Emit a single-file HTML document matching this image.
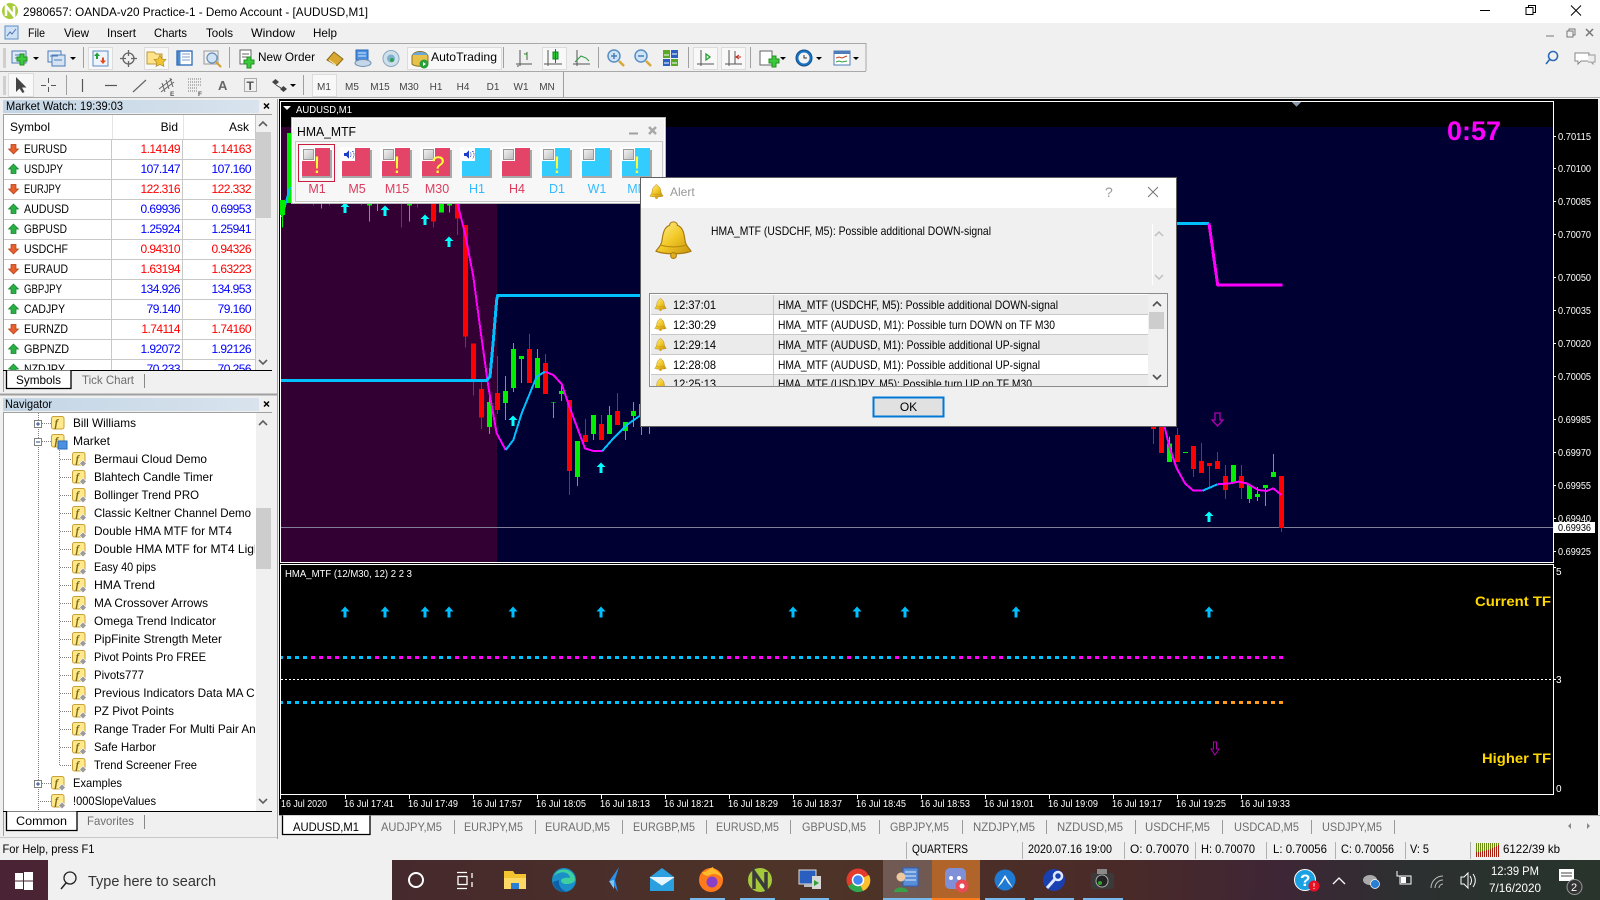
<!DOCTYPE html>
<html><head><meta charset="utf-8"><title>MT4</title>
<style>
html,body{margin:0;padding:0;background:#f0f0f0;width:1600px;height:900px;overflow:hidden}
svg{display:block}
text{font-family:"Liberation Sans",sans-serif;font-size:12px;fill:#000}
.ax text,.ax{font-size:10px;fill:#fff}
.g{fill:#6e6e6e}
.tf{font-size:10px;fill:#444;text-anchor:middle}
.r{fill:#ff0000;text-anchor:end}
.b{fill:#0000ff;text-anchor:end}
.lb{font-size:12.5px;text-anchor:middle}
.pr{font-size:10px;fill:#fff}
.ex{font-size:24px;fill:#ffff33;text-anchor:middle}
.crisp{shape-rendering:crispEdges}
</style></head><body>
<svg width="1600" height="900" viewBox="0 0 1600 900" xmlns="http://www.w3.org/2000/svg">
<defs>
<linearGradient id="hd" x1="0" x2="1" y1="0" y2="0"><stop offset="0" stop-color="#c3d5e5"/><stop offset="1" stop-color="#d8e3ed"/></linearGradient>
<linearGradient id="tb" x1="0" x2="1" y1="0" y2="0"><stop offset="0" stop-color="#4a2434"/><stop offset=".25" stop-color="#46292c"/><stop offset=".5" stop-color="#4e3428"/><stop offset=".7" stop-color="#4a2a28"/><stop offset=".8" stop-color="#3e2636"/><stop offset=".88" stop-color="#2c3030"/><stop offset="1" stop-color="#28342c"/></linearGradient>
<linearGradient id="bl" x1="0" x2="1" y1="0" y2="1"><stop offset="0" stop-color="#fff2a0"/><stop offset=".5" stop-color="#f2c927"/><stop offset="1" stop-color="#c8930e"/></linearGradient>
<linearGradient id="ck" x1="0" x2="1" y1="0" y2="1"><stop offset="0" stop-color="#f4f4f4"/><stop offset="1" stop-color="#bdbdbd"/></linearGradient>
<symbol id="bell" viewBox="0 0 40 40"><path d="M20 2c-3 0-4 2-4 3.500C9 8 9 17 8 22 7 27 3 30 2 32c8 3.500 28 3.500 36 0-1-2-5-5-6-10-1-5-1-14-8-16.500C24 4 23 2 20 2Z" fill="url(#bl)" stroke="#a87a10" stroke-width="1.200"/><path d="M7 26c8 2 18 2 26 0" fill="none" stroke="#b88a10" stroke-width="1.200"/><circle cx="20" cy="36.500" r="3" fill="#e0ae20" stroke="#a87a10"/></symbol>
<symbol id="fi" viewBox="0 0 15 15"><rect x=".5" y=".5" width="12.500" height="12.500" rx="2" fill="#ffe98a" stroke="#c9a136"/><text x="3.500" y="10.500" style="font:italic bold 11px 'Liberation Serif',serif;fill:#7a6a20">f</text><path d="M11 8l3.500 3.500-3.500 3.500-3.500-3.500Z" fill="#9a9a9a" stroke="#fff" stroke-width=".6"/></symbol>
<symbol id="fo" viewBox="0 0 15 15"><rect x=".5" y=".5" width="12.500" height="12.500" rx="2" fill="#ffe98a" stroke="#c9a136"/><text x="3.500" y="10.500" style="font:italic bold 11px 'Liberation Serif',serif;fill:#7a6a20">f</text></symbol>
<path id="ud" d="M-5 0-2.500 0-2.500-4.500 2.500-4.500 2.500 0 5 0 0 5Z" fill="#e8602c" stroke="#b03c14" stroke-width=".7"/>
<path id="uu" d="M-5 0-2.500 0-2.500 4.500 2.500 4.500 2.500 0 5 0 0-5Z" fill="#28b044" stroke="#128028" stroke-width=".7"/>
<path id="ca" d="M0-5.500-4.500-1-1.500-1-1.500 5 1.500 5 1.500-1 4.500-1Z" fill="#00ffff"/>
<path id="sa" d="M0-5.500-4.500-.5-1.500-.5-1.500 5.500 1.500 5.500 1.500-.5 4.500-.5Z" fill="#00bfff"/>
<symbol id="ts" viewBox="0 0 34 34"><rect x="0" y="0" width="31" height="30" fill="#fff"/><rect x="2" y="3" width="30" height="28" fill="#a8a8a8"/><rect x="2" y="1" width="28" height="28"/></symbol>
<symbol id="cb" viewBox="0 0 14 14"><rect x="0" y="0" width="13" height="13" fill="#fff"/><rect x="1.500" y="1.500" width="10" height="10" fill="url(#ck)" stroke="#999" stroke-width=".8"/></symbol>
<symbol id="spk" viewBox="0 0 14 14"><rect x="0" y="0" width="13" height="13" fill="#fff"/><path d="M2 5h2l3-3v9l-3-3H2Z" fill="#1f3fc8"/><path d="M8.500 4.500c1 1.500 1 3 0 4.500M10.500 3c2 2.500 2 5 0 7.500" stroke="#1f3fc8" fill="none" stroke-dasharray="1 1"/></symbol>
<clipPath id="mw"><rect x="4" y="115" width="252" height="255"/></clipPath>
<clipPath id="nv"><rect x="4" y="413" width="251" height="398"/></clipPath>
<clipPath id="al"><rect x="650" y="294" width="498" height="92"/></clipPath>
<clipPath id="dt"><rect x="281" y="640" width="1100" height="80"/></clipPath>
</defs>

<rect width="1600" height="900" fill="#f0f0f0"/>
<rect width="1600" height="23" fill="#fff"/>
<!-- Title bar -->
<circle cx="10" cy="11" r="8" fill="#a6cc3a"/><path d="M6 16V6l8 10V6" stroke="#fff" stroke-width="2.500" fill="none"/>
<text x="23" y="16" textLength="345" lengthAdjust="spacingAndGlyphs">2980657: OANDA-v20 Practice-1 - Demo Account - [AUDUSD,M1]</text>
<path d="M1480 10.500h10" stroke="#000"/><rect x="1526" y="7.500" width="7" height="7" fill="none" stroke="#000"/><path d="M1528.500 7.500v-2h7v7h-2" fill="none" stroke="#000"/><path d="M1571 5.500l10 10m0-10l-10 10" stroke="#000"/>

<!-- Menu -->
<rect x="5" y="26" width="13" height="13" fill="#cfe2f5" stroke="#5b8fc9"/><path d="M7 36l3-4 2 2 4-5" stroke="#4a70b0" fill="none"/>
<text x="28" y="37" textLength="17" lengthAdjust="spacingAndGlyphs">File</text>
<text x="64" y="37" textLength="25" lengthAdjust="spacingAndGlyphs">View</text>
<text x="107" y="37" textLength="29" lengthAdjust="spacingAndGlyphs">Insert</text>
<text x="154" y="37" textLength="33" lengthAdjust="spacingAndGlyphs">Charts</text>
<text x="206" y="37" textLength="27" lengthAdjust="spacingAndGlyphs">Tools</text>
<text x="251" y="37" textLength="44" lengthAdjust="spacingAndGlyphs">Window</text>
<text x="313" y="37" textLength="24" lengthAdjust="spacingAndGlyphs">Help</text>
<g stroke="#777" fill="none"><path d="M1546 36h8"/><rect x="1567" y="31" width="6" height="6"/><path d="M1569 31v-2h6v6h-2"/><path d="M1586 29l7 7m0-7l-7 7" stroke-width="1.500"/></g>

<!-- Toolbar frame -->
<g class="crisp">
<path d="M0 43.500H866V71M0 71.500H866M0 97.500H1600" stroke="#a8a8a8" fill="none"/>
<path d="M563.500 72V97M83.500 47V68M229.500 47V68M503.500 47V68M598.500 47V68M688.500 47V68M750.500 47V68M66.500 75V95M303.500 75V95" stroke="#a0a0a0" fill="none"/>
<rect x="3" y="48" width="3" height="20" fill="#cfcfcf"/><rect x="3" y="76" width="3" height="19" fill="#cfcfcf"/>
<g fill="#f8f8f8" stroke="#dcdcdc">
<rect x="88.500" y="47.500" width="24" height="22"/>
<rect x="144.500" y="47.500" width="24" height="22"/>
<rect x="407.500" y="47.500" width="94" height="22"/>
<rect x="542.500" y="47.500" width="24" height="22"/>
<rect x="693.500" y="47.500" width="24" height="22"/>
<rect x="721.500" y="47.500" width="24" height="22"/>
<rect x="8.500" y="73.500" width="25" height="23"/>
<rect x="312.500" y="74.500" width="24" height="22"/>
</g>
</g>
<!-- Toolbar 1 icons -->
<g>
<rect x="12" y="51" width="14" height="12" fill="#dfeaf7" stroke="#4d7cb8"/><path d="M15 55h5M15 58h5" stroke="#4d7cb8"/><path d="M20 54h4v3h3v4h-3v4h-4v-4h-3v-4h3Z" fill="#3dc93d" stroke="#1f8f1f"/>
<path d="M33 57h6l-3 3Z" fill="#000"/>
<rect x="48" y="51" width="13" height="11" fill="#e3ecf7" stroke="#4d7cb8"/><rect x="52" y="55" width="13" height="11" fill="#d5e3f3" stroke="#4d7cb8"/><path d="M50 56h8M54 60h8" stroke="#4d7cb8"/>
<path d="M70 57h6l-3 3Z" fill="#000"/>
<rect x="93" y="51" width="15" height="15" fill="#eef4fb" stroke="#5a8cc8"/><path d="M97 52.500l3 3.500h-2v3h-2v-3h-2Z" fill="#20a030"/><path d="M103 64l-3-3.500h2v-3h2v3h2Z" fill="#e04a1a"/>
<circle cx="128.500" cy="58.500" r="5.500" fill="none" stroke="#666" stroke-width="1.300"/><path d="M128.500 50v6M128.500 61v6M120 58.500h6M131 58.500h6" stroke="#666" stroke-width="1.300"/>
<path d="M147 52h7l2 2h6v10h-15Z" fill="#ffe28a" stroke="#b89a40"/><path d="M160 55l2 4 4 .5-3 3 1 4-4-2-4 2 1-4-3-3 4-.5Z" fill="#f4c430" stroke="#a08020" stroke-width=".6"/>
<rect x="177" y="51" width="15" height="14" fill="#fff" stroke="#2a68b8" stroke-width="1.300"/><rect x="177.500" y="51.500" width="3" height="13" fill="#4d8ad0"/><path d="M182 54h8M182 57h8M182 60h8" stroke="#7a9fcf"/>
<rect x="204" y="51" width="14" height="13" fill="#f0f0f0" stroke="#999"/><circle cx="212" cy="58" r="5" fill="#cfe3f5" stroke="#6a8fb8" stroke-width="1.200"/><path d="M216 62l5 5" stroke="#d0a030" stroke-width="2"/>
<rect x="240" y="50" width="11" height="14" fill="#fff" stroke="#666"/><path d="M242 54h7M242 57h7" stroke="#666"/><path d="M247 57h4v3h3v4h-3v4h-4v-4h-3v-4h3Z" fill="#3dc93d" stroke="#1f8f1f"/>
<text x="258" y="61" textLength="57" lengthAdjust="spacingAndGlyphs">New Order</text>
<path d="M327 60l7-8 9 7-6 6.500Z" fill="#d8a830" stroke="#8a6a18"/><path d="M329 60l7 5" stroke="#fff2b0"/>
<rect x="356" y="50" width="12" height="10" fill="#4a90e0" stroke="#2a68b8"/><path d="M358 53h8M358 56h8" stroke="#d8e8fa"/><ellipse cx="363" cy="63" rx="8" ry="3.500" fill="#c4d6e8" stroke="#6f8fb0"/>
<circle cx="391" cy="58.500" r="8" fill="#cfe0ea" stroke="#8aa8c0"/><circle cx="391" cy="58.500" r="4" fill="#7fb0d0"/><circle cx="392" cy="60" r="2" fill="#30a050"/>
<path d="M412 56c2-6 14-6 16 0v8c-3 3-13 3-16 0Z" fill="#e8c24a" stroke="#8a7020"/><path d="M412 55c3-4 13-4 16 0" fill="#6aa8d8"/><circle cx="424" cy="64" r="4.500" fill="#28a038"/><path d="M423 62l3 2-3 2Z" fill="#fff"/>
<text x="431" y="61" textLength="66" lengthAdjust="spacingAndGlyphs">AutoTrading</text>
<!-- chart type icons -->
<path d="M520 50v16M516 64h16M517 66h2M527 52v8" stroke="#555" fill="none"/><path d="M524 54h3v4" stroke="#208020" fill="none"/>
<path d="M548 50v16M544 64h18" stroke="#555" fill="none"/><rect x="553" y="52" width="5" height="7" fill="#22cc33" stroke="#108020"/><path d="M555.500 49v14" stroke="#108020"/>
<path d="M577 50v16M573 64h17" stroke="#555" fill="none"/><path d="M575 62l6-6 5 2 3 3" stroke="#2a9a40" fill="none"/>
<circle cx="614" cy="56" r="6" fill="#cfe4f7" stroke="#5a8fc4" stroke-width="1.500"/><path d="M611 56h6M614 53v6" stroke="#4a7fb4" stroke-width="1.500"/><path d="M619 61l5 5" stroke="#d5a83a" stroke-width="2.500"/>
<circle cx="641" cy="56" r="6" fill="#cfe4f7" stroke="#5a8fc4" stroke-width="1.500"/><path d="M638 56h6" stroke="#4a7fb4" stroke-width="1.500"/><path d="M646 61l5 5" stroke="#d5a83a" stroke-width="2.500"/>
<rect x="663" y="50" width="7" height="8" fill="#5aa828"/><rect x="671" y="50" width="7" height="8" fill="#2a60c0"/><rect x="663" y="59" width="7" height="7" fill="#2a60c0"/><rect x="671" y="59" width="7" height="7" fill="#5aa828"/><path d="M664 55h5M672 54h5M664 63h5M672 63h5" stroke="#fff"/>
<path d="M701 50v16M697 64h17" stroke="#555" fill="none"/><path d="M706 54v6l4-3Z" fill="none" stroke="#20a030" stroke-width="1.300"/>
<path d="M729 50v16M725 64h17M735 51v13" stroke="#555" fill="none"/><path d="M741 57h-4M739 55l-3 2 3 2" stroke="#c02010" fill="none"/>
<rect x="760" y="51" width="12" height="14" fill="#fff" stroke="#666"/><path d="M769 59h3v-3h4v3h3v4h-3v4h-4v-4h-3Z" fill="#3dc93d" stroke="#1f8f1f"/><path d="M780 57h6l-3 3Z" fill="#000"/>
<circle cx="804" cy="58" r="8" fill="#1a74c4" stroke="#124f8a"/><circle cx="804" cy="58" r="5.500" fill="#f4f4f4"/><path d="M804 55v3h3" stroke="#333" fill="none"/><path d="M816 57h6l-3 3Z" fill="#000"/>
<rect x="834" y="51" width="16" height="14" fill="#fff" stroke="#4d7cb8"/><rect x="834" y="51" width="16" height="3" fill="#4d7cb8"/><path d="M836 58l3-1 3 1 5-2" stroke="#c04020" fill="none"/><path d="M836 62l3-1 3 1 5-1" stroke="#30a040" fill="none"/><path d="M853 57h6l-3 3Z" fill="#000"/>
<path d="M1553 51.500a4.500 4.500 0 1 0 .1 0ZM1550 59l-4 5" fill="none" stroke="#2a68b8" stroke-width="1.600"/>
<path d="M1575 53h14v8h-8l-3 3v-3h-3Z" fill="#fff" stroke="#888"/><path d="M1588 55h7v7h-2v2l-2-2h-3" fill="#eee" stroke="#999"/>
</g>
<!-- Toolbar 2 icons -->
<g>
<path d="M16 77v15l3.500-3.500 3 4.500 2-1-2.500-4.500h4.500Z" fill="#444"/>
<path d="M48.500 78v5M48.500 87v5M41 85.500h5M51 85.500h5" stroke="#555"/>
<path d="M82.500 79v13" stroke="#555" stroke-width="1.200"/>
<path d="M105 85.500h12" stroke="#555" stroke-width="1.200"/>
<path d="M133 92l13-12" stroke="#666" stroke-width="1.200"/>
<path d="M159 89l13-10M161 92l13-10M162 83l3 9M166 80l3 9M170 78l3 9" stroke="#666"/><text x="170" y="96" style="font-size:6.500px;font-weight:bold;fill:#555">E</text>
<path d="M188 79h14M188 82h14M188 85h14M188 88h10M188 91h10" stroke="#777" stroke-dasharray="1 1"/><text x="198" y="96" style="font-size:6.500px;font-weight:bold;fill:#555">F</text>
<text x="218" y="90" style="font-size:13px;font-weight:bold;fill:#666">A</text>
<rect x="244.500" y="78.500" width="12" height="13" fill="none" stroke="#666" stroke-dasharray="1 1"/><text x="246.500" y="90" style="font-size:12px;font-weight:bold;fill:#555">T</text>
<path d="M272 82l3.500-3 3.500 3-3.500 3ZM280 89l3.500-3 3.500 3-3.500 3Z" fill="#444"/><path d="M276 85l5 3" stroke="#444"/>
<path d="M290 84h6l-3 3Z" fill="#000"/>
<text class="tf" x="324" y="90">M1</text><text class="tf" x="352" y="90">M5</text><text class="tf" x="380" y="90">M15</text><text class="tf" x="409" y="90">M30</text><text class="tf" x="436" y="90">H1</text><text class="tf" x="463" y="90">H4</text><text class="tf" x="493" y="90">D1</text><text class="tf" x="521" y="90">W1</text><text class="tf" x="547" y="90">MN</text>
</g>

<!-- Left panels -->
<g class="crisp">
<rect x="277" y="99" width="1" height="740" fill="#a0a0a0"/>
<rect x="3" y="100" width="256" height="13" fill="url(#hd)"/>
<rect x="3" y="398" width="256" height="13" fill="url(#hd)"/>
<path d="M0 394.500H277" stroke="#a0a0a0" stroke-width="2"/>
<!-- MW table -->
<rect x="4" y="115" width="252" height="255" fill="#fff"/>
<path d="M3.500 114V392M3.500 114.500H272" stroke="#a0a0a0" fill="none"/>
<path d="M112.500 115V139M183.500 115V139" stroke="#e4e4e4"/>
<g stroke="#c8c8c8" fill="none"><path d="M4 139.500H255M4 159.500H255M4 179.500H255M4 199.500H255M4 219.500H255M4 239.500H255M4 259.500H255M4 279.500H255M4 299.500H255M4 319.500H255M4 339.500H255M4 359.500H255M111.500 139V370M182.500 139V370M255.500 115V370"/></g>
<rect x="256" y="115" width="16" height="255" fill="#f0f0f0"/><rect x="256" y="132" width="15" height="86" fill="#cdcdcd"/>
</g>
<path d="M259 126l4-4 4 4M259 360l4 4 4-4" fill="none" stroke="#606060" stroke-width="1.600"/>
<text x="6" y="110" textLength="117" lengthAdjust="spacingAndGlyphs" style="font-size:12px">Market Watch: 19:39:03</text>
<path d="M264 103.500l5 5m0-5l-5 5M264 401.500l5 5m0-5l-5 5" stroke="#000" stroke-width="1.500"/>
<text x="5" y="408" textLength="47" lengthAdjust="spacingAndGlyphs">Navigator</text>
<text x="10" y="131" textLength="40" lengthAdjust="spacingAndGlyphs">Symbol</text>
<text x="178" y="131" text-anchor="end">Bid</text><text x="249" y="131" text-anchor="end">Ask</text>
<g clip-path="url(#mw)">
<use href="#ud" x="13.500" y="149"/><use href="#uu" x="13.500" y="169"/><use href="#ud" x="13.500" y="189"/><use href="#uu" x="13.500" y="209"/><use href="#uu" x="13.500" y="229"/><use href="#ud" x="13.500" y="249"/><use href="#ud" x="13.500" y="269"/><use href="#uu" x="13.500" y="289"/><use href="#uu" x="13.500" y="309"/><use href="#ud" x="13.500" y="329"/><use href="#uu" x="13.500" y="349"/><use href="#uu" x="13.500" y="369"/>
<g>
<text x="24" y="153" textLength="43" lengthAdjust="spacingAndGlyphs">EURUSD</text>
<text x="24" y="173" textLength="39" lengthAdjust="spacingAndGlyphs">USDJPY</text>
<text x="24" y="193" textLength="37" lengthAdjust="spacingAndGlyphs">EURJPY</text>
<text x="24" y="213" textLength="45" lengthAdjust="spacingAndGlyphs">AUDUSD</text>
<text x="24" y="233" textLength="43" lengthAdjust="spacingAndGlyphs">GBPUSD</text>
<text x="24" y="253" textLength="44" lengthAdjust="spacingAndGlyphs">USDCHF</text>
<text x="24" y="273" textLength="44" lengthAdjust="spacingAndGlyphs">EURAUD</text>
<text x="24" y="293" textLength="38" lengthAdjust="spacingAndGlyphs">GBPJPY</text>
<text x="24" y="313" textLength="41" lengthAdjust="spacingAndGlyphs">CADJPY</text>
<text x="24" y="333" textLength="44" lengthAdjust="spacingAndGlyphs">EURNZD</text>
<text x="24" y="353" textLength="45" lengthAdjust="spacingAndGlyphs">GBPNZD</text>
<text x="24" y="373" textLength="41" lengthAdjust="spacingAndGlyphs">NZDJPY</text>
</g>
<g style="letter-spacing:-.55px">
<text class="r" x="180" y="153">1.14149</text><text class="r" x="251" y="153">1.14163</text>
<text class="b" x="180" y="173">107.147</text><text class="b" x="251" y="173">107.160</text>
<text class="r" x="180" y="193">122.316</text><text class="r" x="251" y="193">122.332</text>
<text class="b" x="180" y="213">0.69936</text><text class="b" x="251" y="213">0.69953</text>
<text class="b" x="180" y="233">1.25924</text><text class="b" x="251" y="233">1.25941</text>
<text class="r" x="180" y="253">0.94310</text><text class="r" x="251" y="253">0.94326</text>
<text class="r" x="180" y="273">1.63194</text><text class="r" x="251" y="273">1.63223</text>
<text class="b" x="180" y="293">134.926</text><text class="b" x="251" y="293">134.953</text>
<text class="b" x="180" y="313">79.140</text><text class="b" x="251" y="313">79.160</text>
<text class="r" x="180" y="333">1.74114</text><text class="r" x="251" y="333">1.74160</text>
<text class="b" x="180" y="353">1.92072</text><text class="b" x="251" y="353">1.92126</text>
<text class="b" x="180" y="373">70.233</text><text class="b" x="251" y="373">70.256</text>
</g></g>
<rect x="4" y="370" width="268" height="22" fill="#f0f0f0"/>
<path d="M3 370.500H272" stroke="#000" class="crisp"/>
<path d="M6.500 370.500V388.500H71V370.500" fill="#fff" stroke="#000" stroke-width="1.300"/>
<text x="16" y="384" textLength="45" lengthAdjust="spacingAndGlyphs">Symbols</text>
<text class="g" x="82" y="384" textLength="52" lengthAdjust="spacingAndGlyphs">Tick Chart</text>
<path d="M144.500 374V388" stroke="#888"/>

<!-- Navigator -->
<g class="crisp"><rect x="4" y="413" width="252" height="398" fill="#fff"/><path d="M3.500 412V836M3.500 412.500H272" stroke="#a0a0a0" fill="none"/>
<rect x="256" y="413" width="16" height="398" fill="#f0f0f0"/><rect x="256" y="508" width="15" height="61" fill="#cdcdcd"/></g>
<path d="M259 425l4-4 4 4M259 799l4 4 4-4" fill="none" stroke="#606060" stroke-width="1.600"/>
<g fill="none" stroke="#808080" stroke-dasharray="1 1" class="crisp">
<path d="M38.500 413V811M59.500 450V765M42 423.500H51M42 441.500H51M42 783.500H51M38 801.500H51"/>
<path d="M60 459.500H71M60 477.500H71M60 495.500H71M60 513.500H71M60 531.500H71M60 549.500H71M60 567.500H71M60 585.500H71M60 603.500H71M60 621.500H71M60 639.500H71M60 657.500H71M60 675.500H71M60 693.500H71M60 711.500H71M60 729.500H71M60 747.500H71M60 765.500H71"/>
</g>
<g class="crisp" fill="#fff" stroke="#808080"><rect x="34.500" y="420.500" width="7" height="7"/><rect x="34.500" y="438.500" width="7" height="7"/><rect x="34.500" y="780.500" width="7" height="7"/></g>
<path d="M36 424h4M38 422v4M36 442h4M36 784h4M38 782v4" stroke="#224a90"/>
<g clip-path="url(#nv)">
<use href="#fo" x="51" y="416" width="15" height="15"/><use href="#fo" x="51" y="434" width="15" height="15"/>
<rect x="58" y="441" width="9" height="8" fill="#4d8fe0" stroke="#2a68b8"/>
<use href="#fi" x="72" y="452" width="15" height="15"/><use href="#fi" x="72" y="470" width="15" height="15"/><use href="#fi" x="72" y="488" width="15" height="15"/><use href="#fi" x="72" y="506" width="15" height="15"/><use href="#fi" x="72" y="524" width="15" height="15"/><use href="#fi" x="72" y="542" width="15" height="15"/><use href="#fi" x="72" y="560" width="15" height="15"/><use href="#fi" x="72" y="578" width="15" height="15"/><use href="#fi" x="72" y="596" width="15" height="15"/><use href="#fi" x="72" y="614" width="15" height="15"/><use href="#fi" x="72" y="632" width="15" height="15"/><use href="#fi" x="72" y="650" width="15" height="15"/><use href="#fi" x="72" y="668" width="15" height="15"/><use href="#fi" x="72" y="686" width="15" height="15"/><use href="#fi" x="72" y="704" width="15" height="15"/><use href="#fi" x="72" y="722" width="15" height="15"/><use href="#fi" x="72" y="740" width="15" height="15"/><use href="#fi" x="72" y="758" width="15" height="15"/>
<use href="#fi" x="51" y="776" width="15" height="15"/><use href="#fi" x="51" y="794" width="15" height="15"/>
<text x="73" y="427" textLength="63" lengthAdjust="spacingAndGlyphs">Bill Williams</text>
<text x="73" y="445" textLength="37" lengthAdjust="spacingAndGlyphs">Market</text>
<text x="94" y="463" textLength="113" lengthAdjust="spacingAndGlyphs">Bermaui Cloud Demo</text>
<text x="94" y="481" textLength="119" lengthAdjust="spacingAndGlyphs">Blahtech Candle Timer</text>
<text x="94" y="499" textLength="105" lengthAdjust="spacingAndGlyphs">Bollinger Trend PRO</text>
<text x="94" y="517" textLength="157" lengthAdjust="spacingAndGlyphs">Classic Keltner Channel Demo</text>
<text x="94" y="535" textLength="138" lengthAdjust="spacingAndGlyphs">Double HMA MTF for MT4</text>
<text x="94" y="553" textLength="170" lengthAdjust="spacingAndGlyphs">Double HMA MTF for MT4 Light</text>
<text x="94" y="571" textLength="62" lengthAdjust="spacingAndGlyphs">Easy 40 pips</text>
<text x="94" y="589" textLength="61" lengthAdjust="spacingAndGlyphs">HMA Trend</text>
<text x="94" y="607" textLength="114" lengthAdjust="spacingAndGlyphs">MA Crossover Arrows</text>
<text x="94" y="625" textLength="122" lengthAdjust="spacingAndGlyphs">Omega Trend Indicator</text>
<text x="94" y="643" textLength="128" lengthAdjust="spacingAndGlyphs">PipFinite Strength Meter</text>
<text x="94" y="661" textLength="112" lengthAdjust="spacingAndGlyphs">Pivot Points Pro FREE</text>
<text x="94" y="679" textLength="50" lengthAdjust="spacingAndGlyphs">Pivots777</text>
<text x="94" y="697" textLength="183" lengthAdjust="spacingAndGlyphs">Previous Indicators Data MA Cross</text>
<text x="94" y="715" textLength="80" lengthAdjust="spacingAndGlyphs">PZ Pivot Points</text>
<text x="94" y="733" textLength="193" lengthAdjust="spacingAndGlyphs">Range Trader For Multi Pair Analyzer</text>
<text x="94" y="751" textLength="62" lengthAdjust="spacingAndGlyphs">Safe Harbor</text>
<text x="94" y="769" textLength="103" lengthAdjust="spacingAndGlyphs">Trend Screener Free</text>
<text x="73" y="787" textLength="49" lengthAdjust="spacingAndGlyphs">Examples</text>
<text x="73" y="805" textLength="83" lengthAdjust="spacingAndGlyphs">!000SlopeValues</text>
</g>
<rect x="4" y="811" width="268" height="25" fill="#f0f0f0"/>
<path d="M3 811.500H272" stroke="#000" class="crisp"/>
<path d="M6.500 811.500V830.500H77V811.500" fill="#fff" stroke="#000" stroke-width="1.300"/>
<text x="16" y="825" textLength="51" lengthAdjust="spacingAndGlyphs">Common</text>
<text class="g" x="87" y="825" textLength="47" lengthAdjust="spacingAndGlyphs">Favorites</text>
<path d="M144.500 815V829" stroke="#888"/>
<path d="M0 837.500H277" stroke="#c8c8c8" class="crisp"/>

<!-- CHART -->
<g class="crisp">
<rect x="279" y="99" width="1319" height="716" fill="#000"/>
<rect x="281" y="127" width="216" height="435" fill="#330033"/>
<rect x="497" y="127" width="1056" height="435" fill="#000033"/>
<rect x="280" y="101" width="1274" height="1" fill="#fff"/>
<rect x="280" y="101" width="1" height="462" fill="#fff"/>
<rect x="1553" y="101" width="1" height="462" fill="#fff"/>
<rect x="280" y="562" width="1274" height="1" fill="#fff"/>
<rect x="280" y="564" width="1274" height="1" fill="#fff"/>
<rect x="280" y="564" width="1" height="231" fill="#fff"/>
<rect x="1553" y="564" width="1" height="231" fill="#fff"/>
<rect x="280" y="794" width="1274" height="1" fill="#fff"/>
<rect x="281" y="527" width="1272" height="1" fill="#808098"/>
<path d="M1292 102h9l-4.500 5Z" fill="#8898a8"/>
<path d="M1553 136.500h3M1553 168.500h3M1553 201.500h3M1553 234.500h3M1553 277.500h3M1553 310.500h3M1553 343.500h3M1553 376.500h3M1553 419.500h3M1553 452.500h3M1553 485.500h3M1553 518.500h3M1553 551.500h3M1553 567.500h3M1553 679.500h3" stroke="#fff"/>
<path d="M280.500 795v4M345.500 795v4M409.500 795v4M473.500 795v4M537.500 795v4M601.500 795v4M665.500 795v4M729.500 795v4M793.500 795v4M857.500 795v4M921.500 795v4M985.500 795v4M1049.500 795v4M1113.500 795v4M1177.500 795v4M1241.500 795v4" stroke="#fff"/>
</g>
<path d="M283 106h8l-4 4Z" fill="#fff"/>
<text x="296" y="113" class="ax" textLength="56" lengthAdjust="spacingAndGlyphs">AUDUSD,M1</text>
<text x="1447" y="140" textLength="54" lengthAdjust="spacingAndGlyphs" style="font-size:27px;font-weight:bold;fill:#ff00ff">0:57</text>

<!-- left edge bits -->
<g class="crisp"><rect x="287" y="133" width="4" height="70" fill="#00ee00"/></g>
<path d="M282 217L290 187" stroke="#00bfff" stroke-width="2" fill="none" class="crisp"/>

<!-- candles left -->
<g transform="translate(280,200) scale(.33333)" class="crisp" fill="none">
<path stroke="#00ee00" stroke-width="3" d="M7 0V83M124 0V25M268 0V65M292 0V33M388 0V65M508 0V38M628 590V702M676 528V660M700 429V576M724 468V549M772 447V564M820 607V654M844 558V603M892 723V858M940 645V720M988 618V702M1036 666V720M1060 606V681M1084 612V705M1108 640V702"/>
<path stroke="#ff0000" stroke-width="3" d="M100 0V17M148 0V17M244 0V17M364 0V83M412 0V23M460 0V83M532 0V105M556 75V443M580 430V587M604 546V687M652 468V642M748 402V549M796 462V582M868 600V885M916 657V726M964 645V720M1012 579V675"/>
<path stroke="#00ee00" stroke-width="15" d="M7 0V45M268 0V17M388 0V17M484 0V38M508 0V17M628 606V681M676 573V609M700 447V564M724 468V477M772 474V564M820 606V608M844 573V582M892 723V831M940 645V702M988 645V702M1036 666V693M1060 633V648M1084 612V650"/>
<path stroke="#ff0000" stroke-width="15" d="M460 0V65M532 0V56M556 75V410M580 430V537M604 567V653M652 579V630M748 447V549M796 489V582M868 600V813M916 705V726M964 672V720M1012 633V675"/>
</g>
<g transform="translate(280,200) scale(.33333)" fill="none" stroke-linejoin="round" class="crisp">
<path stroke="#ff00ff" stroke-width="6" d="M533 12L555 100L580 230L600 380L625 560L650 700L677 750"/>
<path stroke="#00bfff" stroke-width="6" d="M677 750L700 720L725 640L770 530L795 515"/>
<path stroke="#ff00ff" stroke-width="6" d="M795 515L820 525L845 552L870 625L915 745L940 753L967 753"/>
<path stroke="#00bfff" stroke-width="6" d="M967 753L1000 715L1040 675L1090 640"/>
<path stroke="#00bfff" stroke-width="9" d="M3 541H620L630 530L640 420L650 300L653 286H1090"/>
</g>
<use href="#ca" x="345" y="208"/><use href="#ca" x="385" y="211"/><use href="#ca" x="425" y="220"/><use href="#ca" x="449" y="242"/><use href="#ca" x="513" y="421"/><use href="#ca" x="601" y="468"/><use href="#ca" x="1209" y="517"/>

<!-- candles right -->
<g transform="translate(1130,100) scale(.33333)" class="crisp" fill="none">
<path stroke="#00ee00" stroke-width="3" d="M118 1010V1086M358 1155V1209M382 1161V1203M406 1155V1218M430 1062V1131"/>
<path stroke="#ff0000" stroke-width="3" d="M70 950V1032M94 950V1059M142 984V1086M190 1038V1131M214 1029V1119M238 1089V1165M262 1056V1107M286 1095V1197M334 1095V1197M454 1128V1296"/>
<path stroke="#00ee00" stroke-width="15" d="M118 1030V1086M310 1095V1146M358 1155V1197M382 1182V1191M406 1155V1164M430 1116V1131M166 1056V1059"/>
<path stroke="#ff0000" stroke-width="15" d="M70 950V987M94 950V1059M142 1005V1086M190 1038V1107M214 1083V1119M238 1089V1098M262 1083V1107M286 1128V1170M334 1128V1164M454 1128V1284"/>
</g>
<g transform="translate(1130,100) scale(.33333)" fill="none" stroke-linejoin="round" class="crisp">
<path stroke="#00bfff" stroke-width="9" d="M0 370H237"/>
<path stroke="#ff00ff" stroke-width="9" d="M237 370L263 555H457"/>
<path stroke="#ff00ff" stroke-width="6" d="M95 950L105 985L118 1040L140 1105L165 1150L190 1172L218 1172"/>
<path stroke="#00bfff" stroke-width="6" d="M218 1172L262 1153"/>
<path stroke="#ff00ff" stroke-width="6" d="M262 1153L300 1150L325 1145L350 1150L385 1170L410 1173L430 1165L454 1185"/>
</g>
<path d="M1215 413h5v7h3l-5.500 6-5.500-6h3Z" fill="none" stroke="#b000b0" stroke-width="1.300"/>

<!-- price axis -->
<g>
<text class="pr" x="1558" y="140" textLength="33" lengthAdjust="spacingAndGlyphs">0.70115</text>
<text class="pr" x="1558" y="172" textLength="33" lengthAdjust="spacingAndGlyphs">0.70100</text>
<text class="pr" x="1558" y="205" textLength="33" lengthAdjust="spacingAndGlyphs">0.70085</text>
<text class="pr" x="1558" y="238" textLength="33" lengthAdjust="spacingAndGlyphs">0.70070</text>
<text class="pr" x="1558" y="281" textLength="33" lengthAdjust="spacingAndGlyphs">0.70050</text>
<text class="pr" x="1558" y="314" textLength="33" lengthAdjust="spacingAndGlyphs">0.70035</text>
<text class="pr" x="1558" y="347" textLength="33" lengthAdjust="spacingAndGlyphs">0.70020</text>
<text class="pr" x="1558" y="380" textLength="33" lengthAdjust="spacingAndGlyphs">0.70005</text>
<text class="pr" x="1558" y="423" textLength="33" lengthAdjust="spacingAndGlyphs">0.69985</text>
<text class="pr" x="1558" y="456" textLength="33" lengthAdjust="spacingAndGlyphs">0.69970</text>
<text class="pr" x="1558" y="489" textLength="33" lengthAdjust="spacingAndGlyphs">0.69955</text>
<text class="pr" x="1558" y="522" textLength="33" lengthAdjust="spacingAndGlyphs">0.69940</text>
<rect x="1554" y="522" width="41" height="11" fill="#fff"/>
<text x="1558" y="531" textLength="33" lengthAdjust="spacingAndGlyphs" style="font-size:10px;fill:#000">0.69936</text>
<text class="pr" x="1558" y="555" textLength="33" lengthAdjust="spacingAndGlyphs">0.69925</text>
<text class="pr" x="1556" y="575">5</text><text class="pr" x="1556" y="683">3</text><text class="pr" x="1556" y="792">0</text>
</g>

<!-- Sub window -->
<text x="285" y="577" class="ax" textLength="127" lengthAdjust="spacingAndGlyphs">HMA_MTF (12/M30, 12) 2 2 3</text>
<use href="#sa" x="345" y="612"/><use href="#sa" x="385" y="612"/><use href="#sa" x="425" y="612"/><use href="#sa" x="449" y="612"/><use href="#sa" x="513" y="612"/><use href="#sa" x="601" y="612"/><use href="#sa" x="793" y="612"/><use href="#sa" x="857" y="612"/><use href="#sa" x="905" y="612"/><use href="#sa" x="1016" y="612"/><use href="#sa" x="1209" y="612"/>
<g clip-path="url(#dt)"><g class="crisp" fill="none" stroke-width="3" stroke-dasharray="4 4" transform="translate(-2,0)">
<path stroke="#00bfff" d="M281 657.500H1285"/>
<path stroke="#ff00ff" d="M313 657.500H345M377 657.500H381M401 657.500H421M433 657.500H437M457 657.500H509M553 657.500H597M729 657.500H793M849 657.500H853M897 657.500H901M961 657.500H1009M1081 657.500H1209M1225 657.500H1285"/>
<path stroke="#00bfff" d="M281 702.500H1217"/>
<path stroke="#ff9a1a" d="M1217 702.500H1285"/>
</g></g>
<path d="M281 679.500H1553" stroke="#fff" stroke-dasharray="2 2" class="crisp"/>
<text x="1475" y="606" textLength="76" lengthAdjust="spacingAndGlyphs" style="font-size:14px;font-weight:bold;fill:#ffd700">Current TF</text>
<text x="1482" y="763" textLength="69" lengthAdjust="spacingAndGlyphs" style="font-size:14px;font-weight:bold;fill:#ffd700">Higher TF</text>
<path d="M1213.500 742h3v7h2.500l-4 6-4-6h2.500Z" fill="none" stroke="#b000b0"/>

<!-- time axis -->
<g class="ax">
<text class="ax" x="281" y="807" textLength="46" lengthAdjust="spacingAndGlyphs">16 Jul 2020</text>
<text class="ax" x="344" y="807" textLength="50" lengthAdjust="spacingAndGlyphs">16 Jul 17:41</text>
<text class="ax" x="408" y="807" textLength="50" lengthAdjust="spacingAndGlyphs">16 Jul 17:49</text>
<text class="ax" x="472" y="807" textLength="50" lengthAdjust="spacingAndGlyphs">16 Jul 17:57</text>
<text class="ax" x="536" y="807" textLength="50" lengthAdjust="spacingAndGlyphs">16 Jul 18:05</text>
<text class="ax" x="600" y="807" textLength="50" lengthAdjust="spacingAndGlyphs">16 Jul 18:13</text>
<text class="ax" x="664" y="807" textLength="50" lengthAdjust="spacingAndGlyphs">16 Jul 18:21</text>
<text class="ax" x="728" y="807" textLength="50" lengthAdjust="spacingAndGlyphs">16 Jul 18:29</text>
<text class="ax" x="792" y="807" textLength="50" lengthAdjust="spacingAndGlyphs">16 Jul 18:37</text>
<text class="ax" x="856" y="807" textLength="50" lengthAdjust="spacingAndGlyphs">16 Jul 18:45</text>
<text class="ax" x="920" y="807" textLength="50" lengthAdjust="spacingAndGlyphs">16 Jul 18:53</text>
<text class="ax" x="984" y="807" textLength="50" lengthAdjust="spacingAndGlyphs">16 Jul 19:01</text>
<text class="ax" x="1048" y="807" textLength="50" lengthAdjust="spacingAndGlyphs">16 Jul 19:09</text>
<text class="ax" x="1112" y="807" textLength="50" lengthAdjust="spacingAndGlyphs">16 Jul 19:17</text>
<text class="ax" x="1176" y="807" textLength="50" lengthAdjust="spacingAndGlyphs">16 Jul 19:25</text>
<text class="ax" x="1240" y="807" textLength="50" lengthAdjust="spacingAndGlyphs">16 Jul 19:33</text>
</g>

<!-- Chart tabs -->
<g class="crisp">
<rect x="279" y="815" width="1321" height="23" fill="#f0f0f0"/>
<path d="M279 815.500H1600" stroke="#a8a8a8"/>
<path d="M454.500 820V834M535.500 820V834M622.500 820V834M706.500 820V834M790.500 820V834M879.500 820V834M962.500 820V834M1046.500 820V834M1135.500 820V834M1222.500 820V834M1311.500 820V834M1394.500 820V834" stroke="#999"/>
</g>
<path d="M282.500 815.500V834.500H370V815.500" fill="#fff" stroke="#000" stroke-width="1.300"/>
<text x="293" y="831" textLength="66" lengthAdjust="spacingAndGlyphs">AUDUSD,M1</text>
<g>
<text class="g" x="381" y="831" textLength="61" lengthAdjust="spacingAndGlyphs">AUDJPY,M5</text>
<text class="g" x="464" y="831" textLength="59" lengthAdjust="spacingAndGlyphs">EURJPY,M5</text>
<text class="g" x="545" y="831" textLength="65" lengthAdjust="spacingAndGlyphs">EURAUD,M5</text>
<text class="g" x="633" y="831" textLength="62" lengthAdjust="spacingAndGlyphs">EURGBP,M5</text>
<text class="g" x="716" y="831" textLength="63" lengthAdjust="spacingAndGlyphs">EURUSD,M5</text>
<text class="g" x="802" y="831" textLength="64" lengthAdjust="spacingAndGlyphs">GBPUSD,M5</text>
<text class="g" x="890" y="831" textLength="59" lengthAdjust="spacingAndGlyphs">GBPJPY,M5</text>
<text class="g" x="973" y="831" textLength="62" lengthAdjust="spacingAndGlyphs">NZDJPY,M5</text>
<text class="g" x="1057" y="831" textLength="66" lengthAdjust="spacingAndGlyphs">NZDUSD,M5</text>
<text class="g" x="1145" y="831" textLength="65" lengthAdjust="spacingAndGlyphs">USDCHF,M5</text>
<text class="g" x="1234" y="831" textLength="65" lengthAdjust="spacingAndGlyphs">USDCAD,M5</text>
<text class="g" x="1322" y="831" textLength="60" lengthAdjust="spacingAndGlyphs">USDJPY,M5</text>
</g>
<path d="M1571 823l-3 3 3 3ZM1587 823l3 3-3 3Z" fill="#888"/>

<!-- Status -->
<path d="M906.500 842V859M1022.500 842V859M1124.500 842V859M1195.500 842V859M1266.500 842V859M1335.500 842V859M1405.500 842V859M1470.500 842V859" stroke="#b0b0b0" class="crisp"/>
<text x="2.500" y="853" textLength="92" lengthAdjust="spacingAndGlyphs">For Help, press F1</text>
<text x="912" y="853" textLength="56" lengthAdjust="spacingAndGlyphs">QUARTERS</text>
<text x="1028" y="853" textLength="84" lengthAdjust="spacingAndGlyphs">2020.07.16 19:00</text>
<text x="1130" y="853" textLength="59" lengthAdjust="spacingAndGlyphs">O: 0.70070</text>
<text x="1201" y="853" textLength="54" lengthAdjust="spacingAndGlyphs">H: 0.70070</text>
<text x="1273" y="853" textLength="54" lengthAdjust="spacingAndGlyphs">L: 0.70056</text>
<text x="1341" y="853" textLength="53" lengthAdjust="spacingAndGlyphs">C: 0.70056</text>
<text x="1410" y="853" textLength="19" lengthAdjust="spacingAndGlyphs">V: 5</text>
<g class="crisp" stroke-width="1">
<path d="M1476.500 843v14M1478.500 843v14M1480.500 843v14M1482.500 843v14M1484.500 843v14M1486.500 843v14M1488.500 843v14M1490.500 843v14M1492.500 843v14M1494.500 843v14M1496.500 843v14M1498.500 843v14" stroke="#6a8a10"/>
<path d="M1476.500 852v5M1478.500 852v5M1480.500 852v5M1482.500 851v6M1484.500 851v6M1486.500 850v7M1488.500 850v7M1490.500 849v8M1492.500 848v9M1494.500 847v10M1496.500 846v11M1498.500 845v12" stroke="#a82010"/>
</g>
<text x="1503" y="853" textLength="57" lengthAdjust="spacingAndGlyphs">6122/39 kb</text>

<!-- HMA panel -->
<g class="crisp">
<rect x="291.500" y="117.500" width="374" height="86" fill="#f0f0f0" stroke="#b8b8b8" stroke-width="1"/>
<rect x="292.500" y="118.500" width="372" height="84" fill="#f3f3f3" stroke="#fff"/>
<rect x="295.500" y="141.500" width="367" height="60" fill="#f7f7f7" stroke="#c8c8c8"/>
</g>
<text x="297" y="136" style="font-size:13px" fill="#1a2a3a" textLength="59" lengthAdjust="spacingAndGlyphs">HMA_MTF</text>
<path d="M629 133.500h9" stroke="#a0a0a0" stroke-width="2"/><path d="M649 127l7 7m0-7l-7 7" stroke="#a8a8a8" stroke-width="2.500"/>
<rect x="298.500" y="144.500" width="36" height="37" fill="none" stroke="#c81e40" class="crisp"/>
<g class="crisp">
<use href="#ts" x="300" y="147" width="34" height="34" fill="#e34468"/>
<use href="#ts" x="340" y="147" width="34" height="34" fill="#e34468"/>
<use href="#ts" x="380" y="147" width="34" height="34" fill="#e34468"/>
<use href="#ts" x="420" y="147" width="34" height="34" fill="#e34468"/>
<use href="#ts" x="460" y="147" width="34" height="34" fill="#33ccff"/>
<use href="#ts" x="500" y="147" width="34" height="34" fill="#e34468"/>
<use href="#ts" x="540" y="147" width="34" height="34" fill="#33ccff"/>
<use href="#ts" x="580" y="147" width="34" height="34" fill="#33ccff"/>
<use href="#ts" x="620" y="147" width="34" height="34" fill="#33ccff"/>
<use href="#cb" x="302" y="148" width="14" height="14"/>
<use href="#spk" x="342" y="148" width="14" height="14"/>
<use href="#cb" x="382" y="148" width="14" height="14"/>
<use href="#cb" x="422" y="148" width="14" height="14"/>
<use href="#spk" x="462" y="148" width="14" height="14"/>
<use href="#cb" x="502" y="148" width="14" height="14"/>
<use href="#cb" x="542" y="148" width="14" height="14"/>
<use href="#cb" x="582" y="148" width="14" height="14"/>
<use href="#cb" x="622" y="148" width="14" height="14"/>
</g>
<text class="ex" x="317" y="173">!</text><text class="ex" x="397" y="173">!</text><text class="ex" x="438" y="173">?</text><text class="ex" x="557" y="173">!</text><text class="ex" x="637" y="173">!</text>
<g>
<text class="lb" x="317" y="193" style="fill:#dc3c5e">M1</text>
<text class="lb" x="357" y="193" style="fill:#dc3c5e">M5</text>
<text class="lb" x="397" y="193" style="fill:#dc3c5e">M15</text>
<text class="lb" x="437" y="193" style="fill:#dc3c5e">M30</text>
<text class="lb" x="477" y="193" style="fill:#33bbff">H1</text>
<text class="lb" x="517" y="193" style="fill:#dc3c5e">H4</text>
<text class="lb" x="557" y="193" style="fill:#33bbff">D1</text>
<text class="lb" x="597" y="193" style="fill:#33bbff">W1</text>
<text class="lb" x="637" y="193" style="fill:#33bbff">MN</text>
</g>

<!-- Alert dialog -->
<g class="crisp">
<rect x="640.500" y="177.500" width="536" height="249" fill="#f0f0f0" stroke="#606060"/>
<rect x="641" y="178" width="535" height="30" fill="#fff"/>
<path d="M1152.500 224V285" stroke="#fff"/>
<rect x="649.500" y="293.500" width="518" height="93" fill="#fff" stroke="#8a8a8a"/>
<rect x="651" y="295" width="497" height="19" fill="#ebebeb"/>
<rect x="651" y="335" width="497" height="19" fill="#ebebeb"/>
<rect x="651" y="375" width="497" height="11" fill="#ebebeb"/>
<path d="M651 314.500H1148M651 334.500H1148M651 354.500H1148M651 374.500H1148M773.500 295V386" stroke="#c8c8c8"/>
<rect x="1148" y="294" width="19" height="92" fill="#f0f0f0"/>
<rect x="1149" y="312" width="15" height="17" fill="#cdcdcd"/>
<rect x="873.500" y="397.500" width="70" height="19" fill="#e1e1e1" stroke="#0078d7" stroke-width="2"/>
</g>
<use href="#bell" x="649" y="184" width="15" height="15"/>
<text x="670" y="196" style="fill:#999">Alert</text>
<text x="1105" y="197" style="font-size:14px;fill:#999">?</text>
<path d="M1148 187l10 10m0-10l-10 10" stroke="#777"/>
<use href="#bell" x="654" y="220" width="39" height="39"/>
<text x="711" y="235" textLength="280" lengthAdjust="spacingAndGlyphs">HMA_MTF (USDCHF, M5): Possible additional DOWN-signal</text>
<path d="M1155 236l4-4 4 4M1155 275l4 4 4-4" fill="none" stroke="#c0c0c0" stroke-width="1.500"/>
<g clip-path="url(#al)">
<use href="#bell" x="654" y="298" width="13" height="13"/><use href="#bell" x="654" y="318" width="13" height="13"/><use href="#bell" x="654" y="338" width="13" height="13"/><use href="#bell" x="654" y="358" width="13" height="13"/><use href="#bell" x="654" y="378" width="13" height="13"/>
<text x="673" y="309" textLength="43" lengthAdjust="spacingAndGlyphs">12:37:01</text>
<text x="673" y="329" textLength="43" lengthAdjust="spacingAndGlyphs">12:30:29</text>
<text x="673" y="349" textLength="43" lengthAdjust="spacingAndGlyphs">12:29:14</text>
<text x="673" y="369" textLength="43" lengthAdjust="spacingAndGlyphs">12:28:08</text>
<text x="673" y="388" textLength="43" lengthAdjust="spacingAndGlyphs">12:25:13</text>
<text x="778" y="309" textLength="280" lengthAdjust="spacingAndGlyphs">HMA_MTF (USDCHF, M5): Possible additional DOWN-signal</text>
<text x="778" y="329" textLength="277" lengthAdjust="spacingAndGlyphs">HMA_MTF (AUDUSD, M1): Possible turn DOWN on TF M30</text>
<text x="778" y="349" textLength="262" lengthAdjust="spacingAndGlyphs">HMA_MTF (AUDUSD, M1): Possible additional UP-signal</text>
<text x="778" y="369" textLength="262" lengthAdjust="spacingAndGlyphs">HMA_MTF (AUDUSD, M1): Possible additional UP-signal</text>
<text x="778" y="388" textLength="254" lengthAdjust="spacingAndGlyphs">HMA_MTF (USDJPY, M5): Possible turn UP on TF M30</text>
</g>
<path d="M1153 306l4-4 4 4M1153 375l4 4 4-4" fill="none" stroke="#505050" stroke-width="1.600"/>
<text x="908.500" y="411" text-anchor="middle">OK</text>

<!-- Taskbar -->
<rect x="0" y="860" width="1600" height="40" fill="url(#tb)"/>
<g fill="#fff"><rect x="15" y="873" width="8" height="7.500"/><rect x="24" y="872" width="9" height="8.500"/><rect x="15" y="881.500" width="8" height="7.500"/><rect x="24" y="881.500" width="9" height="8.500"/></g>
<rect x="48" y="860" width="344" height="40" fill="#f0f0f0"/>
<circle cx="70" cy="878" r="6" fill="none" stroke="#222" stroke-width="1.300"/><path d="M66 883l-5 6" stroke="#222" stroke-width="1.500"/>
<text x="88" y="886" textLength="128" lengthAdjust="spacingAndGlyphs" style="font-size:15px;fill:#333">Type here to search</text>
<circle cx="416" cy="880" r="7" fill="none" stroke="#fff" stroke-width="2"/>
<path d="M457 872.500h10M457 888.500h10M472 873v5M472 882v5" stroke="#fff" stroke-width="1.300"/><rect x="458" y="876.500" width="9" height="8" fill="none" stroke="#fff" stroke-width="1.300"/>
<path d="M504 871h9l2 3h11v15h-22Z" fill="#f4c430"/><rect x="504" y="878" width="22" height="11" fill="#ffd966"/><rect x="511" y="883" width="8" height="6" fill="#2a7fd4"/>
<circle cx="564" cy="880" r="12" fill="#1a8fc8"/><path d="M554 876c3-9 18-9 21 2 1 5-5 6-9 6-5 0-6-4-4-5 3-2 8-1 8-1 0-5-8-9-16-2Z" fill="#3fd0a0"/><path d="M553 882c1 7 8 11 15 10-6-1-10-6-9-12Z" fill="#0d5fa8"/>
<path d="M619 867l-9 13 8 12-3-12Z" fill="#2a8fe8"/><path d="M614 880l-5 1 5 8Z" fill="#7fc4f8"/>
<path d="M650 877l12-9 12 9v14h-24Z" fill="#2ba0e0"/><path d="M650 877l12 8 12-8" fill="#e8f6ff" stroke="#e8f6ff"/>
<circle cx="711" cy="880" r="12" fill="#ff7a1a"/><circle cx="712" cy="882" r="5.500" fill="#8a3fc8"/><path d="M702 872c4 1 6-3 11-5 0 3 8 4 10 12-4-5-9-6-13-4-3 2-7 0-8-3Z" fill="#ffbb2a"/>
<circle cx="760" cy="880" r="12" fill="#a4c93a"/><path d="M754 889V872L766 889V872" stroke="#3a3a3a" stroke-width="3.500" fill="none"/>
<rect x="799" y="870" width="17" height="14" fill="#2a5fc0" stroke="#ddd"/><rect x="804" y="884" width="8" height="3" fill="#bbb"/><rect x="812" y="876" width="9" height="13" fill="#d8d8d8"/><path d="M814 880l5 3-5 3Z" fill="#30a030"/>
<circle cx="858" cy="880" r="11.500" fill="#e33b2e"/><path d="M858 880L848 886a11.500 11.500 0 0 0 15 5Z" fill="#2fa84f"/><path d="M858 880l5 11a11.500 11.500 0 0 0 6-16Z" fill="#fbc02d"/><circle cx="858" cy="880" r="5.500" fill="#4285f4" stroke="#fff" stroke-width="1.500"/>
<rect x="883" y="860" width="49" height="40" fill="#fff" opacity=".2"/>
<rect x="903" y="868" width="15" height="18" fill="#5a8fd8" stroke="#2a5fc0"/><path d="M905 872h11M905 876h11M905 880h11" stroke="#dfeaff"/><circle cx="901" cy="877" r="4.500" fill="#f0c8a0"/><path d="M894 892c0-6 14-6 14 0Z" fill="#3aa048"/>
<rect x="932" y="860" width="48" height="40" fill="#b0642a"/>
<rect x="945" y="868" width="21" height="21" rx="5" fill="#7f90d8"/><circle cx="951" cy="878" r="2" fill="#fff"/><circle cx="959" cy="878" r="2" fill="#fff"/><circle cx="962" cy="886" r="6.500" fill="#ea4a55"/><circle cx="962" cy="886" r="2.500" fill="#fff"/>
<circle cx="1005" cy="880" r="10.500" fill="#1f7ad4"/><path d="M997 888l8-13 8 13-5-5-3-5-3 5Z" fill="#fff"/>
<circle cx="1054" cy="880" r="11" fill="#1a3fb0"/><circle cx="1058" cy="876" r="4" fill="none" stroke="#dfe8ff" stroke-width="2.500"/><path d="M1055 879l-8 9" stroke="#dfe8ff" stroke-width="3"/>
<rect x="1091" y="873" width="23" height="16" rx="2" fill="#3a3a3a"/><circle cx="1102" cy="881" r="6" fill="#222" stroke="#aaa"/><rect x="1097" y="869" width="10" height="5" fill="#8a8a8a"/><circle cx="1100" cy="883" r="2" fill="#30a030"/>
<g class="crisp"><rect x="800" y="898" width="29" height="2" fill="#76b9ed"/><rect x="883" y="898" width="49" height="2" fill="#76b9ed"/><rect x="932" y="898" width="48" height="2" fill="#ff7a1a"/><rect x="985" y="898" width="40" height="2" fill="#76b9ed"/><rect x="1034" y="898" width="40" height="2" fill="#76b9ed"/><rect x="1083" y="898" width="40" height="2" fill="#76b9ed"/><rect x="690" y="898" width="35" height="2" fill="#76b9ed"/><rect x="740" y="898" width="35" height="2" fill="#76b9ed"/></g>
<circle cx="1305" cy="880" r="10.500" fill="#1ba1e2" stroke="#fff"/><text x="1300" y="886" style="font-size:17px;font-weight:bold;fill:#fff">?</text><circle cx="1314" cy="886" r="5.500" fill="#e81123"/><path d="M1314 883v3.500M1314 888v1" stroke="#fff"/>
<path d="M1333 884l6-6 6 6" fill="none" stroke="#fff" stroke-width="1.300"/>
<ellipse cx="1370" cy="880" rx="7" ry="5" fill="#aaa"/><circle cx="1375" cy="884" r="4.500" fill="#2a7fd4" stroke="#fff" stroke-width=".7"/>
<rect x="1400" y="876" width="11" height="8" fill="none" stroke="#fff"/><rect x="1401" y="877" width="5" height="6" fill="#fff"/><path d="M1397 871v5h3" stroke="#fff" fill="none"/>
<path d="M1431 888a12 12 0 0 1 12-12M1435 888a8 8 0 0 1 8-8M1439 888a4 4 0 0 1 4-4" fill="none" stroke="#bbb"/>
<path d="M1461 877h3l4-4v15l-4-4h-3Z" fill="none" stroke="#fff"/><path d="M1470 876c2 3 2 6 0 9M1473 874c3 4 3 9 0 13" fill="none" stroke="#fff"/>
<text x="1491" y="875" textLength="48" lengthAdjust="spacingAndGlyphs" style="fill:#fff">12:39 PM</text>
<text x="1489" y="892" textLength="52" lengthAdjust="spacingAndGlyphs" style="fill:#fff">7/16/2020</text>
<path d="M1559 869h15v12h-15Z" fill="#fff"/><path d="M1561 873h11M1561 876h11" stroke="#444"/>
<circle cx="1574.500" cy="887" r="7.500" fill="#333" stroke="#999"/><text x="1571" y="891" style="font-size:11px;fill:#fff">2</text>
</svg>
</body></html>
